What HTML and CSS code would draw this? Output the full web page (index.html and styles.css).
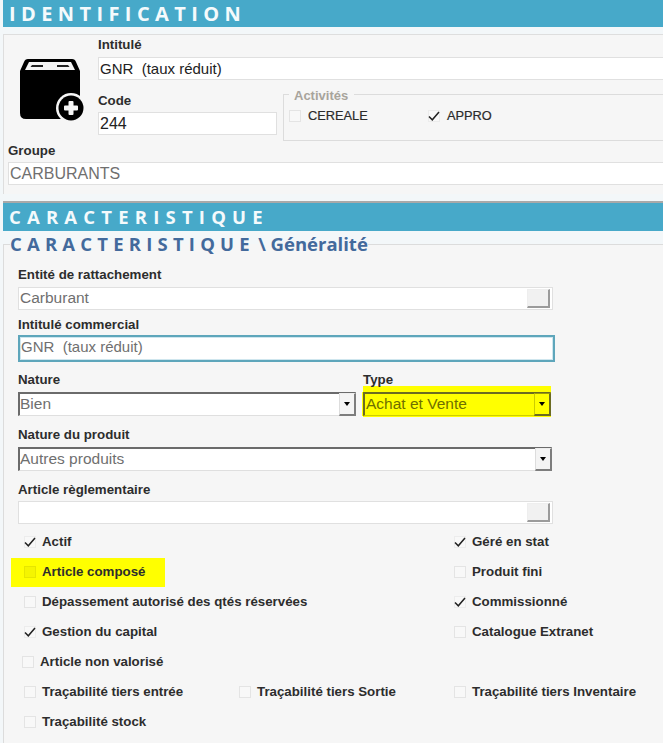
FILE: index.html
```html
<!DOCTYPE html>
<html lang="fr">
<head>
<meta charset="utf-8">
<title>Identification</title>
<link rel="stylesheet" href="styles.css">
</head>
<body>
<header class="band">IDENTIFICATION</header>
<section class="ident">
  <div class="ident-top">
    <svg class="box-icon" width="66" height="66" viewBox="0 0 66 66">
      <path fill="#000" d="M8 0 H52 Q55 0 56 3 L60 12 V54 Q60 60 54 60 H6 Q0 60 0 54 V12 L4 3 Q5 0 8 0 Z"/>
      <path fill="#f6f6f6" d="M9 3 H51 L55 11 H5 Z"/>
      <path fill="#222" d="M12 6 H23 V8 H10.500 Z M37 6 H48 L49.500 8 H37 Z"/>
      <circle cx="51" cy="49" r="15" fill="#f6f6f6"/>
      <circle cx="51" cy="49" r="12.500" fill="#000"/>
      <path fill="#f6f6f6" d="M48.500 43 Q48.500 42 49.500 42 H52.500 Q53.500 42 53.500 43 V46.500 H57 Q58 46.500 58 47.500 V50.500 Q58 51.500 57 51.500 H53.500 V55 Q53.500 56 52.500 56 H49.500 Q48.500 56 48.500 55 V51.500 H45 Q44 51.500 44 50.500 V47.500 Q44 46.500 45 46.500 H48.500 Z"/>
    </svg>
    <div class="ident-fields">
      <label class="lbl lbl-top">Intitulé</label>
      <div class="input dark full small">GNR&nbsp; (taux réduit)</div>
      <div class="code-row">
        <div class="code-col">
          <label class="lbl lbl-code">Code</label>
          <div class="input dark code">244</div>
        </div>
        <fieldset class="activites">
          <legend>Activités</legend>
          <div class="act-row">
            <span class="opt act-a"><span class="cb"></span>CEREALE</span>
            <span class="opt"><span class="cb on"><svg class="tick" width="12" height="10" viewBox="0 0 12 10"><path d="M1 5.500 L4.300 8.800 L11 1" fill="none" stroke="#222" stroke-width="1.500"/></svg></span>APPRO</span>
          </div>
        </fieldset>
      </div>
    </div>
  </div>
  <div class="groupe">
    <label class="lbl">Groupe</label>
    <div class="input full grey">CARBURANTS</div>
  </div>
</section>
<div class="rule"></div>
<header class="band band-2">CARACTERISTIQUE</header>
<fieldset class="carac">
  <legend><span class="spaced">CARACTERISTIQUE</span> \ Généralité</legend>
  <div class="form">
    <label class="lbl lbl-first">Entité de rattachement</label>
    <div class="input grey lookup mid">Carburant<span class="lookup-btn"></span></div>
    <label class="lbl lbl-m">Intitulé commercial</label>
    <div class="input grey focus small">GNR&nbsp; (taux réduit)</div>
    <div class="two">
      <div class="col-nature">
        <label class="lbl">Nature</label>
        <div class="select grey">Bien<span class="arrow"></span></div>
      </div>
      <div class="col-type">
        <label class="lbl">Type</label>
        <div class="select yellow">Achat et Vente<span class="arrow"></span></div>
      </div>
    </div>
    <label class="lbl lbl-s">Nature du produit</label>
    <div class="select grey wide">Autres produits<span class="arrow"></span></div>
    <label class="lbl lbl-s lbl-art">Article règlementaire</label>
    <div class="input lookup"><span class="lookup-btn"></span></div>
  </div>
  <div class="checks">
    <div class="opt-row"><span class="opt bold"><span class="cb on"><svg class="tick" width="12" height="10" viewBox="0 0 12 10"><path d="M1 5.500 L4.300 8.800 L11 1" fill="none" stroke="#222" stroke-width="1.500"/></svg></span>Actif</span><span class="opt bold c3"><span class="cb on"><svg class="tick" width="12" height="10" viewBox="0 0 12 10"><path d="M1 5.500 L4.300 8.800 L11 1" fill="none" stroke="#222" stroke-width="1.500"/></svg></span>Géré en stat</span></div>
    <div class="opt-row"><span class="opt bold marked"><span class="cb"></span>Article composé</span><span class="opt bold c3"><span class="cb"></span>Produit fini</span></div>
    <div class="opt-row"><span class="opt bold"><span class="cb"></span>Dépassement autorisé des qtés réservées</span><span class="opt bold c3"><span class="cb on"><svg class="tick" width="12" height="10" viewBox="0 0 12 10"><path d="M1 5.500 L4.300 8.800 L11 1" fill="none" stroke="#222" stroke-width="1.500"/></svg></span>Commissionné</span></div>
    <div class="opt-row"><span class="opt bold"><span class="cb on"><svg class="tick" width="12" height="10" viewBox="0 0 12 10"><path d="M1 5.500 L4.300 8.800 L11 1" fill="none" stroke="#222" stroke-width="1.500"/></svg></span>Gestion du capital</span><span class="opt bold c3"><span class="cb"></span>Catalogue Extranet</span></div>
    <div class="opt-row shift"><span class="opt bold"><span class="cb"></span>Article non valorisé</span></div>
    <div class="opt-row"><span class="opt bold"><span class="cb"></span>Traçabilité tiers entrée</span><span class="opt bold c2"><span class="cb"></span>Traçabilité tiers Sortie</span><span class="opt bold c3"><span class="cb"></span>Traçabilité tiers Inventaire</span></div>
    <div class="opt-row"><span class="opt bold"><span class="cb"></span>Traçabilité stock</span></div>
  </div>
</fieldset>
</body>
</html>
```

FILE: styles.css
```css
* { box-sizing: border-box; }
html, body { margin: 0; padding: 0; }
body {
  width: 663px;
  height: 743px;
  overflow: hidden;
  background: #f3f7f9;
  font-family: "Liberation Sans", Arial, sans-serif;
  color: #2b2b2b;
}
.band {
  margin-left: 3px;
  height: 27px;
  background: #47a9c9;
  color: #f4fafc;
  font: 700 20px/27px "Open Sans", sans-serif;
  letter-spacing: 5.400px;
  padding-left: 6px;
  white-space: nowrap;
}
.band-2 {
  height: 28px;
  font-size: 18.500px;
  line-height: 28px;
  letter-spacing: 6.200px;
}
.ident {
  margin: 7px 0 0 3px;
  height: 160px;
  background: #f6f6f6;
  border-top: 1px solid #dedede;
  border-left: 1px solid #dedede;
}
.ident-top { display: flex; height: 108px; }
.box-icon { margin: 24px 0 0 16px; flex: none; }
.ident-fields { margin-left: 12px; flex: 1; min-width: 0; }
.lbl {
  display: block;
  font-size: 13.300px;
  line-height: 16px;
  font-weight: 700;
  color: #2d2d2d;
}
.lbl-top { margin-top: 2px; height: 20px; }
.input, .select {
  height: 23px;
  line-height: 21px;
  font-size: 15.500px;
  background: #fff;
  border: 1px solid #e0e0e0;
  padding-left: 1px;
  white-space: nowrap;
}
.small { font-size: 15px; }
.dark { color: #222; }
.grey { color: #6f6f6f; }
.full { margin-right: -2px; }
.groupe .input { font-size: 16px; }
.code-row { display: flex; }
.code-col { width: 179px; margin-right: 6px; }
.lbl-code { margin-top: 12px; height: 20px; padding-top: 1px; }
.code { width: 179px; font-size: 16px; }
.activites {
  flex: 1;
  margin: 5px 0 0;
  padding: 0 0 0 5px;
  height: 56px;
  border: 1px solid #dcdcdc;
  border-right: 0;
  min-width: 0;
}
.activites legend {
  padding: 4px 6px 0 5px;
  margin-left: 0;
  font-size: 13px;
  line-height: 14px;
  font-weight: 700;
  color: #a8a49c;
}
.act-row { display: flex; margin-top: 4px; height: 18px; }
.opt {
  display: inline-flex;
  align-items: center;
  font-size: 12.800px;
  line-height: 18px;
  color: #2b2b2b;
  white-space: nowrap;
}
.act-row .opt { -webkit-text-stroke: 0.200px #2b2b2b; }
.act-a { width: 139px; }
.cb {
  flex: none;
  width: 12px;
  height: 12px;
  margin-right: 7px;
  border: 1px solid #e4e4e4;
  background: #f8f8f8;
  display: flex;
  align-items: center;
  justify-content: center;
}
.cb.on { border-color: #ececec; }
.tick { flex: none; }
.groupe { padding-left: 4px; }
.groupe .lbl { height: 19px; }
.rule {
  margin: 7px 0 0 3px;
  height: 2px;
  background: #a9a9a9;
}
.carac {
  margin: 1px 0 0 3px;
  padding: 0 0 0 14px;
  border: 0;
  border-left: 1px solid #dcdcdc;
  border-top: 1px solid #dcdcdc;
  background: #f6f6f6;
  height: 512px;
  min-width: 0;
}
.carac legend {
  padding: 0;
  margin-left: -8px;
  font: 700 18.500px/24px "Open Sans", sans-serif;
  color: #436a9c;
  white-space: nowrap;
}
.spaced { letter-spacing: 5.200px; margin-right: -1.500px; }
.form { width: 536px; padding-top: 11px; }
.lbl-first { height: 20px; }
.lookup {
  width: 535px;
  display: flex;
  align-items: flex-start;
  justify-content: space-between;
  line-height: 19px;
}
.lookup-btn {
  flex: none;
  margin: 1px 2px 0 auto;
  width: 23px;
  height: 19px;
  background: #f1f1f1;
  border-right: 2px solid #9b9b9b;
  border-bottom: 2px solid #9b9b9b;
  border-left: 1px solid #eee;
  border-top: 1px solid #eee;
}
.lbl-m { margin-top: 7px; height: 18px; }
.focus {
  width: 537px;
  height: 27px;
  line-height: 20px;
  border: 2px solid #5ea6bb;
  outline: 1px solid #cfe6ee;
  outline-offset: -3px;
}
.two { display: flex; margin-top: 10px; }
.col-nature { width: 345px; }
.col-type { width: 188px; }
.col-nature .lbl, .col-type .lbl { height: 20px; }
.select {
  display: flex;
  justify-content: space-between;
  border: 1px solid #dfdfdf;
  border-top: 2px solid #6b6b6b;
  border-left: 2px solid #6b6b6b;
  padding-left: 0;
  line-height: 19px;
  height: 24px;
}
.col-nature .select { width: 338px; }
.yellow {
  width: 188px;
  padding-left: 1px;
  background: #ffff00;
  color: #6f6f00;
  box-shadow: 0 -6px 0 #ffff00, 0 1px 0 #ffff00, -1px 0 0 #ffff00;
  border-color: #6b6b22;
  border-bottom-color: #cfcf00;
  border-right-color: #ffff00;
}
.wide { width: 534px; }
.lbl-s { margin-top: 11px; height: 20px; }
.lbl-art { height: 19px; }
.arrow {
  flex: none;
  display: flex;
  align-items: center;
  justify-content: center;
  margin: -1px -1px 0 0;
  width: 17px;
  height: 23px;
  background: #f4f4f4;
  border-left: 1px solid #ddd;
  border-top: 1px solid #eee;
  border-right: 2px solid #7d7d7d;
  border-bottom: 2px solid #7d7d7d;
}
.yellow .arrow {
  background: #ffff00;
  border-color: #99990a #6b6b22 #6b6b22 #cccc00;
}
.arrow::after {
  content: "";
  border: 3.500px solid transparent;
  border-top: 4px solid #000;
  border-bottom: 0;
}
.checks { margin-top: 3px; }
.opt-row {
  display: grid;
  grid-template-columns: 215px 215px 1fr;
  height: 30px;
  align-items: center;
  padding-left: 6px;
}
.checks .opt { font-size: 13.300px; color: #2d2d2d; }
.checks .cb { margin-right: 6px; }
.bold { font-weight: 700; }
.shift { padding-left: 4px; }
.c2 { grid-column: 2; }
.c3 { grid-column: 3; }
.checks .marked {
  background: #ffff00;
  margin-left: -13px;
  padding-left: 13px;
  width: 154px;
  height: 29px;
}
.marked .cb { background: #f5f500; border-color: #e6e600; }
```
